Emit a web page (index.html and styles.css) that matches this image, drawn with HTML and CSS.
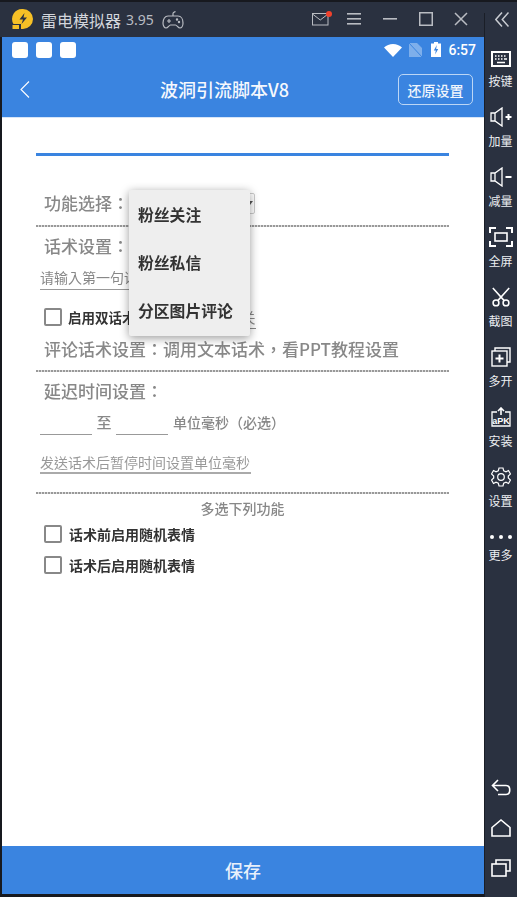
FILE: index.html
```html
<!DOCTYPE html>
<html lang="zh-CN">
<head>
<meta charset="utf-8">
<title>雷电模拟器</title>
<link rel="stylesheet" href="styles.css">
</head>
<body>
<div class="app">
  <div class="main">
    <header class="titlebar">
      <svg class="logo" width="22" height="22" viewBox="0 0 22 22"><path d="M11 1a10 10 0 0 1 0 20H9v-5H1.500A10 10 0 0 1 11 1z" fill="#f6c026"/><rect x="0.500" y="17" width="6.500" height="4" fill="#f6c026"/><path d="M12.500 5 7.500 11.500h3.500l-1.500 4.500 5.500-6.500h-3.500z" fill="#2a3140"/></svg>
      <span class="brand">雷电模拟器</span>
      <span class="version">3.95</span>
      <svg class="pad" width="22" height="20" viewBox="0 0 22 20" fill="none" stroke="#b9bcc2" stroke-width="1.200"><path d="M6 6h10c3 0 5 3 5 7 0 3-1.500 5-3 5-2 0-3-3-4.500-3h-5C7 15 6 18 4 18c-1.500 0-3-2-3-5 0-4 2-7 5-7z"/><path d="M11 6V3.500C11 2 12.500 2 13.500 1.500"/><path d="M5 11h4M7 9v4"/><circle cx="15" cy="9.500" r=".6"/><circle cx="17" cy="12" r=".6"/></svg>
      <span class="winctl">
        <span class="mail">
          <svg width="18" height="14" viewBox="0 0 18 14" fill="none" stroke="#b9bcc2" stroke-width="1"><rect x=".5" y="1.500" width="15.500" height="11.500"/><path d="M.5 2 8.250 8 16 2"/></svg>
          <i class="dot"></i>
        </span>
        <svg class="ctl-menu" width="14" height="13" viewBox="0 0 14 13" fill="#b9bcc2"><rect width="14" height="1.600" y="1"/><rect width="14" height="1.600" y="6"/><rect width="14" height="1.600" y="11"/></svg>
        <svg class="ctl-min" width="14" height="14" viewBox="0 0 14 14" fill="#b9bcc2"><rect width="14" height="1.600" y="6"/></svg>
        <svg class="ctl-max" width="14" height="14" viewBox="0 0 14 14" fill="none" stroke="#b9bcc2" stroke-width="1.500"><rect x=".75" y=".75" width="12.500" height="12.500"/></svg>
        <svg class="ctl-close" width="14" height="14" viewBox="0 0 14 14" stroke="#b9bcc2" stroke-width="1.500"><path d="M1 1l12 12M13 1 1 13"/></svg>
      </span>
    </header>

    <div class="statusbar">
      <i class="notif"></i><i class="notif"></i><i class="notif"></i>
      <span class="status-right">
        <svg width="18" height="13" viewBox="0 0 18 13" fill="#fff"><path d="M9 13 0 3.500C2.500 1.300 5.500 0 9 0s6.500 1.300 9 3.500z"/></svg>
        <svg class="nosim" width="13" height="14" viewBox="0 0 13 14"><path d="M0 0h8l5 5v9H0z" fill="#fff" opacity=".35"/><path d="M0 0l13 14" stroke="#3a84e0" stroke-width="1"/></svg>
        <svg class="battery" width="10" height="15" viewBox="0 0 10 15"><path d="M3 0h4v1.500h3V15H0V1.500h3z" fill="#fff"/><path d="M5.800 3 2.800 8.500h2l-.7 4 3.100-5.500h-2z" fill="#3a84e0"/></svg>
        <span class="clock">6:57</span>
      </span>
    </div>

    <nav class="appbar">
      <svg class="back" width="10" height="17" viewBox="0 0 10 17" fill="none" stroke="#fff" stroke-width="1.100"><path d="M9 .5 1 8.500l8 8"/></svg>
      <h1 class="apptitle">波洞引流脚本V8</h1>
      <button class="reset">还原设置</button>
    </nav>

    <main class="content">
      <div class="form" lang="zh-Hant">
        <div class="accent"></div>
        <div class="select-row">
          <span class="heading">功能选择：</span>
          <span class="select"><i class="caret"></i></span>
        </div>
        <div class="dash"></div>
        <div class="heading heading-talk">话术设置：</div>
        <div class="field field-first">请输入第一句话术</div>
        <div class="check-first">
          <i class="box"></i>
          <span class="check-label">启用双话术</span>
          <span class="field-second">关</span>
        </div>
        <div class="heading heading-comment">评论话术设置：调用文本话术，看PPT教程设置</div>
        <div class="dash"></div>
        <div class="heading heading-delay">延迟时间设置：</div>
        <div class="time-row">
          <span class="time-input"></span>
          <span class="to">至</span>
          <span class="time-input"></span>
          <span class="unit">单位毫秒（必选）</span>
        </div>
        <div class="field field-pause">发送话术后暂停时间设置单位毫秒</div>
        <div class="dash"></div>
        <div class="multi">多选下列功能</div>
        <div class="check-row"><i class="box"></i><span class="check-label">话术前启用随机表情</span></div>
        <div class="check-row"><i class="box"></i><span class="check-label">话术后启用随机表情</span></div>
      </div>

      <ul class="popup">
        <li>粉丝关注</li>
        <li>粉丝私信</li>
        <li>分区图片评论</li>
      </ul>
    </main>

    <footer class="save">保存</footer>
  </div>

  <aside class="side">
    <div class="side-head">
      <svg width="14" height="15" viewBox="0 0 14 15" fill="none" stroke="#c9ccd2" stroke-width="1.500"><path d="M7 .5 .8 7.500 7 14.500M13.500 .5 7.300 7.500l6.200 7"/></svg>
    </div>
    <div class="tool">
      <svg width="20" height="20" viewBox="0 0 20 20" fill="none" stroke="#fff"><rect x="1" y="3" width="18" height="14" stroke-width="2"/><path d="M4 7h1.500M7 7h1.500M10 7h1.500M13 7h1.500M4 10h1.500M7 10h1.500M10 10h1.500M13 10h3M6 13.500h8" stroke-width="1.700"/></svg>
      <span>按键</span>
    </div>
    <div class="tool tool-up">
      <svg width="22" height="20" viewBox="0 0 22 20" fill="none" stroke="#fff" stroke-width="1.300"><path d="M1 6h4l7-5v18l-7-5H1zM5 6v8"/><path d="M15.500 10h6M18.500 7v6" stroke-width="2"/></svg>
      <span>加量</span>
    </div>
    <div class="tool tool-up">
      <svg width="22" height="20" viewBox="0 0 22 20" fill="none" stroke="#fff" stroke-width="1.300"><path d="M1 6h4l7-5v18l-7-5H1zM5 6v8"/><path d="M15.500 10h6" stroke-width="2"/></svg>
      <span>减量</span>
    </div>
    <div class="tool tool-up">
      <svg width="24" height="20" viewBox="0 0 24 20" fill="none" stroke="#fff" stroke-width="2"><path d="M7 1H1v5M17 1h6v5M7 19H1v-5M17 19h6v-5"/><rect x="6" y="6" width="12" height="8" stroke-width="1.600"/></svg>
      <span>全屏</span>
    </div>
    <div class="tool tool-up">
      <svg width="22" height="22" viewBox="0 0 22 22" fill="none" stroke="#fff" stroke-width="1.700"><path d="M2 1 14.500 15M20 1 7.500 15"/><circle cx="5.500" cy="17.500" r="3.200"/><circle cx="16.500" cy="17.500" r="3.200"/></svg>
      <span>截图</span>
    </div>
    <div class="tool tool-up">
      <svg width="20" height="20" viewBox="0 0 20 20" fill="none" stroke="#fff" stroke-width="1.400"><path d="M4 4V1h15v14h-3"/><rect x="1" y="4" width="15" height="15"/><path d="M4.500 11.500h8M8.500 7.500v8" stroke-width="2"/></svg>
      <span>多开</span>
    </div>
    <div class="tool tool-up">
      <svg width="20" height="20" viewBox="0 0 20 20" fill="none" stroke="#fff" stroke-width="1.300"><path d="M6 5H1v14h18V5h-5"/><path d="M10 8V1M7 4l3-3 3 3" stroke-width="1.600"/><text x="10" y="17" class="apk">aPK</text></svg>
      <span>安装</span>
    </div>
    <div class="tool tool-up">
      <svg width="20" height="20" viewBox="0 0 20 20" fill="none" stroke="#fff" stroke-width="1.200"><path d="M8 1h4l.7 2.800 2.300 1 2.500-1.300 2 3.500-2.200 2v2l2.200 2-2 3.500-2.500-1.300-2.300 1L12 19H8l-.7-2.800-2.300-1-2.500 1.300-2-3.500 2.200-2V9L.5 7l2-3.500L5 4.800l2.300-1z"/><circle cx="10" cy="10" r="3.300"/></svg>
      <span>设置</span>
    </div>
    <div class="tool tool-more">
      <svg width="24" height="6" viewBox="0 0 24 6" fill="#fff"><circle cx="3" cy="3" r="2"/><circle cx="12" cy="3" r="2"/><circle cx="21" cy="3" r="2"/></svg>
      <span>更多</span>
    </div>
    <div class="side-nav">
      <svg width="20" height="20" viewBox="0 0 20 20" fill="none" stroke="#fff" stroke-width="1.600"><path d="M7 2 1.500 7.500 7 13M1.500 7.500H15c5 0 5 9 0 9H7"/></svg>
      <svg width="20" height="20" viewBox="0 0 20 20" fill="none" stroke="#fff" stroke-width="1.600"><path d="M1 9.500 10 2l9 7.500V18H1z"/></svg>
      <svg width="20" height="20" viewBox="0 0 20 20" fill="none" stroke="#fff" stroke-width="1.600"><rect x="1" y="6" width="14" height="12"/><path d="M5 6V2h14v11h-4"/></svg>
    </div>
  </aside>
</div>
</body>
</html>
```

FILE: styles.css
```css
* { box-sizing: border-box; }
html, body { margin: 0; padding: 0; height: 100%; overflow: hidden; }
body { font-family: "Noto Sans CJK SC", "Noto Sans", sans-serif; background: #2a3140; }
ul { list-style: none; margin: 0; padding: 0; }
i { display: block; font-style: normal; }

.app { display: flex; width: 517px; height: 897px; border-top: 2px solid #17191f; }
.main { width: 484px; display: flex; flex-direction: column; padding-bottom: 3px; border-left: 2px solid #17191f; background: #17191f; flex: none; }

.titlebar { height: 35px; background: #2a3140; display: flex; align-items: center; flex: none; margin-left: -2px; padding-left: 12px; }
.logo { flex: none; margin-top: -1px; }
.brand { color: #d3d6dc; font-size: 16px; margin-left: 7px; }
.version { color: #b9bcc2; font-size: 14px; margin-left: 5px; font-family: "Noto Sans", sans-serif; }
.pad { margin-left: 8px; }
.winctl { margin-left: auto; display: flex; align-items: center; margin-top: -2px; padding-right: 16px; }
.mail { position: relative; display: block; width: 18px; height: 14px; }
.mail svg { display: block; }
.dot { position: absolute; top: -1px; right: -2px; width: 6px; height: 6px; border-radius: 50%; background: #f0412c; }
.ctl-menu { margin-left: 17px; }
.ctl-min { margin-left: 22px; }
.ctl-max { margin-left: 22px; }
.ctl-close { margin-left: 21px; }

.statusbar { height: 26px; background: #3a84e0; display: flex; align-items: center; padding: 0 8px 0 10px; gap: 8px; flex: none; }
.notif { width: 16px; height: 16px; background: #fff; border-radius: 3px; }
.status-right { margin-left: auto; display: flex; align-items: center; }
.nosim { margin-left: 7px; }
.battery { margin-left: 9px; margin-top: -2px; }
.clock { color: #fff; font-family: Roboto, sans-serif; font-size: 14px; font-weight: 500; margin-left: 7px; }

.appbar { height: 55px; background: #3a84e0; display: flex; align-items: center; padding: 0 11px 0 18px; flex: none; border-bottom: 1px solid #d6e5f8; }
.back { flex: none; margin-top: -1px; }
.apptitle { margin: -2px 0 0 130px; color: #f5f8fd; font-size: 18px; font-weight: 500; line-height: 24px; }
.reset { margin-left: auto; width: 75px; height: 31px; padding: 0; background: transparent; color: #f0f5fc; border: 1px solid #bcd6f5; border-radius: 5px; font: 500 14px/1 "Noto Sans CJK SC", sans-serif; margin-top: -1px; }

.content { position: relative; flex: 1; background: #fff; min-height: 0; }
.form { margin-left: 34px; width: 413px; padding-top: 35px; filter: blur(.3px); font-family: "Noto Sans CJK TC", "Noto Sans CJK SC", sans-serif; }
.accent { height: 3px; background: #3a84e0; }
.heading { color: #888; font-size: 17px; font-weight: 500; padding-left: 8px; display: block; white-space: nowrap; }
.select-row { display: flex; align-items: center; height: 21px; margin: 37px 0 11px; }
.select-row .heading { margin-top: -2px; }
.select { margin-left: 1px; width: 125px; height: 21px; border: 1px solid #ccc; border-radius: 2px; position: relative; flex: none; }
.caret { position: absolute; right: 1px; top: 7px; border: 3px solid transparent; border-top: 4px solid #555; }
.dash { height: 2px; background: repeating-linear-gradient(90deg, #999 0 2px, #ddd 2px 3px); }
.heading-talk { height: 39px; line-height: 38px; }
.field { color: #888; font-size: 14px; margin-left: 4px; border-bottom: 1px solid #999; }
.field-first { height: 24px; line-height: 22px; width: 205px; overflow: hidden; white-space: nowrap; }
.check-first { display: flex; align-items: center; height: 39px; padding-left: 8px; padding-top: 15px; }
.box { width: 18px; height: 18px; border: 2px solid #888; border-radius: 2px; flex: none; }
.check-label { color: #333; font-size: 14px; font-weight: 700; margin-left: 6px; white-space: nowrap; }
.check-first .check-label { font-size: 13.500px; }
.field-second { margin-left: 5px; width: 115px; height: 21px; border-bottom: 1px solid #888; color: #888; font-size: 14px; text-align: right; align-self: flex-end; line-height: 18px; flex: none; overflow: hidden; white-space: nowrap; }
.heading-comment { height: 41px; line-height: 40px; }
.heading-delay { height: 38px; line-height: 38px; }
.time-row { display: flex; align-items: center; height: 25px; margin-left: 4px; }
.time-input { width: 52px; height: 25px; border-bottom: 1px solid #999; flex: none; }
.to { color: #888; font-size: 15px; font-weight: 500; width: 24px; text-align: center; margin-top: -2px; }
.unit { color: #888; font-size: 14px; font-weight: 500; margin-left: 5px; white-space: nowrap; margin-top: -2px; }
.field-pause { margin-top: 18px; height: 21px; line-height: 19px; width: 211px; border-bottom-width: 2px; border-bottom-color: #aaa; color: #999; white-space: nowrap; }
.field-pause + .dash { margin-top: 18px; }
.multi { color: #888; font-size: 14px; font-weight: 500; text-align: center; height: 30px; line-height: 28px; }
.check-row { display: flex; align-items: center; height: 18px; padding-left: 8px; margin-top: 1px; margin-bottom: 13px; }
.check-row .check-label { margin-left: 7px; margin-top: -1px; }

.popup { position: absolute; left: 127px; top: 72px; width: 121px; height: 146px; padding: 1px 0; background: #eee; border-radius: 2px; box-shadow: 0 2px 10px rgba(0,0,0,.4); filter: blur(.2px); }
.popup li { height: 48px; line-height: 48px; padding-left: 9px; color: #333; font-size: 15.800px; font-weight: 700; white-space: nowrap; }

.save { height: 48px; background: #3a84e0; color: #e8f0fb; font-size: 18px; font-weight: 500; text-align: center; line-height: 48px; flex: none; }

.side { position: relative; width: 33px; flex: none; background: #2a3140; display: flex; flex-direction: column; align-items: center; }
.side::before { content: ""; position: absolute; left: 0; top: 11px; bottom: 0; width: 1px; background: #1a1e27; }
.side-head { height: 35px; display: flex; align-items: center; justify-content: center; flex: none; margin-bottom: 9px; }
.side-head svg { margin-left: 2px; margin-top: -1px; }
.tool { height: 60px; width: 33px; display: flex; flex-direction: column; align-items: center; padding-top: 3px; flex: none; }
.tool svg { height: 20px; flex: none; }
.tool span { color: #eceef1; font-size: 12px; line-height: 24px; }
.tool-up svg { margin-top: -2px; }
.tool-up span { margin-top: 2px; }
.tool-more { height: auto; padding-top: 8px; }
.tool-more svg { height: 6px; }
.tool-more span { margin-top: 3px; }
.apk { fill: #fff; stroke: none; font: 700 9px "Liberation Sans", sans-serif; text-anchor: middle; }
.side-nav { margin-top: auto; display: flex; flex-direction: column; gap: 20px; padding-bottom: 19px; }
.side-nav svg { display: block; }
```
